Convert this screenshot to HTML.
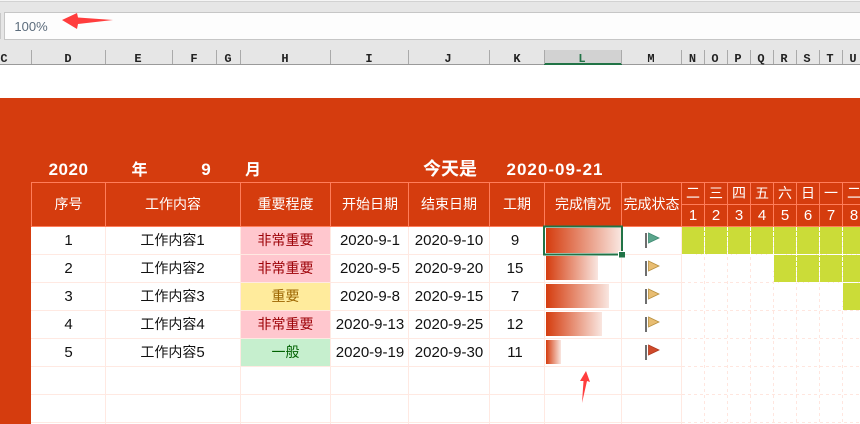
<!DOCTYPE html>
<html><head><meta charset="utf-8">
<style>
html,body{margin:0;padding:0;background:#fff;width:860px;height:424px;overflow:hidden}
svg{display:block}
text{font-family:"Liberation Sans","Noto Sans CJK SC",sans-serif;font-size:14px;text-anchor:middle}
.c text{font-family:"Liberation Mono",monospace;font-size:12px;font-weight:bold;fill:#222}
.h text{fill:#fff}
.t text{fill:#fff;font-weight:bold;font-size:16px}
.b text{fill:#111}
.n{font-size:15px}
.hl line{stroke:#ff7d5a;stroke-width:1}
.bl line{stroke:#ffe9e2;stroke-width:1}
.d line{stroke:#ffe6df;stroke-width:1;stroke-dasharray:3 3}
.cs line{stroke:#aaa;stroke-width:1}
.w line{stroke:#fff;stroke-width:1;stroke-dasharray:4 1}
</style></head><body>
<svg width="860" height="424" viewBox="0 0 860 424" xmlns="http://www.w3.org/2000/svg">
<defs>
<linearGradient id="g"><stop offset="0" stop-color="#d53c0e"/><stop offset="1" stop-color="#f9e6e0"/></linearGradient>
</defs>
<!-- top chrome -->
<rect x="0" y="0" width="860" height="65" fill="#e6e6e6"/>
<rect x="0" y="0" width="860" height="1" fill="#f5f5f5"/>
<rect x="0" y="1" width="860" height="1" fill="#d2d2d2"/>
<rect x="4.5" y="12.5" width="860" height="27" fill="#fdfdfd" stroke="#c6c6c6"/>
<rect x="0" y="13" width="1" height="26" fill="#c8c8c8"/>
<text x="31" y="31" style="font-size:13px;fill:#5c6c7c">100%</text>
<polygon points="62,20 77,13 78,17.5 113,20 78,24 77,29" fill="#ff3d3d"/>
<!-- column header -->
<rect x="544" y="50" width="77" height="14" fill="#d2d2d2"/>
<rect x="0" y="64" width="860" height="1" fill="#9a9a9a"/>
<rect x="544" y="63" width="78" height="2" fill="#217346"/>
<g class="cs">
<line x1="31.5" y1="50" x2="31.5" y2="64"/><line x1="105.5" y1="50" x2="105.5" y2="64"/><line x1="172.5" y1="50" x2="172.5" y2="64"/><line x1="216.5" y1="50" x2="216.5" y2="64"/><line x1="240.5" y1="50" x2="240.5" y2="64"/><line x1="330.5" y1="50" x2="330.5" y2="64"/><line x1="408.5" y1="50" x2="408.5" y2="64"/><line x1="489.5" y1="50" x2="489.5" y2="64"/><line x1="544.5" y1="50" x2="544.5" y2="64"/><line x1="621.5" y1="50" x2="621.5" y2="64"/><line x1="681.5" y1="50" x2="681.5" y2="64"/><line x1="704.5" y1="50" x2="704.5" y2="64"/><line x1="727.5" y1="50" x2="727.5" y2="64"/><line x1="750.5" y1="50" x2="750.5" y2="64"/><line x1="773.5" y1="50" x2="773.5" y2="64"/><line x1="796.5" y1="50" x2="796.5" y2="64"/><line x1="819.5" y1="50" x2="819.5" y2="64"/><line x1="842.5" y1="50" x2="842.5" y2="64"/>
</g>
<g class="c">
<text x="4" y="62">C</text><text x="68" y="62">D</text><text x="138" y="62">E</text><text x="194" y="62">F</text><text x="228" y="62">G</text><text x="285" y="62">H</text><text x="369" y="62">I</text><text x="448" y="62">J</text><text x="517" y="62">K</text><text x="582" y="62" style="fill:#217346">L</text><text x="651" y="62">M</text><text x="692.5" y="62">N</text><text x="715" y="62">O</text><text x="738" y="62">P</text><text x="761" y="62">Q</text><text x="784" y="62">R</text><text x="807" y="62">S</text><text x="830" y="62">T</text><text x="853" y="62">U</text>
</g>
<!-- orange area -->
<rect x="0" y="98" width="860" height="326" fill="#d53c0e"/>
<rect x="31" y="227" width="829" height="197" fill="#fff"/>
<g class="t">
<text x="68.5" y="175" style="font-size:17px;letter-spacing:.5px">2020</text>
<text x="139.5" y="175">年</text>
<text x="206" y="175" style="font-size:17px">9</text>
<text x="253" y="175">月</text>
<text x="450" y="175" style="font-size:18px">今天是</text>
<text x="555" y="175" style="font-size:17px;letter-spacing:1px">2020-09-21</text>
</g>
<!-- header lines -->
<g class="hl">
<line x1="31" y1="182.5" x2="860" y2="182.5"/><line x1="681" y1="204.5" x2="860" y2="204.5"/><line x1="31" y1="226.5" x2="860" y2="226.5"/>
<line x1="31.5" y1="182" x2="31.5" y2="227"/><line x1="105.5" y1="182" x2="105.5" y2="227"/><line x1="240.5" y1="182" x2="240.5" y2="227"/><line x1="330.5" y1="182" x2="330.5" y2="227"/><line x1="408.5" y1="182" x2="408.5" y2="227"/><line x1="489.5" y1="182" x2="489.5" y2="227"/><line x1="544.5" y1="182" x2="544.5" y2="227"/><line x1="621.5" y1="182" x2="621.5" y2="227"/><line x1="681.5" y1="182" x2="681.5" y2="227"/><line x1="704.5" y1="182" x2="704.5" y2="227"/><line x1="727.5" y1="182" x2="727.5" y2="227"/><line x1="750.5" y1="182" x2="750.5" y2="227"/><line x1="773.5" y1="182" x2="773.5" y2="227"/><line x1="796.5" y1="182" x2="796.5" y2="227"/><line x1="819.5" y1="182" x2="819.5" y2="227"/><line x1="842.5" y1="182" x2="842.5" y2="227"/>
</g>
<g class="h">
<text x="68.5" y="209">序号</text><text x="173" y="209">工作内容</text><text x="285.5" y="209">重要程度</text><text x="370" y="209">开始日期</text><text x="449" y="209">结束日期</text><text x="517" y="209">工期</text><text x="583" y="209">完成情况</text><text x="651.5" y="209">完成状态</text>
<text x="693" y="198">二</text><text x="716" y="198">三</text><text x="739" y="198">四</text><text x="762" y="198">五</text><text x="785" y="198">六</text><text x="808" y="198">日</text><text x="831" y="198">一</text><text x="854" y="198">二</text>
<text class="n" x="693" y="220">1</text><text class="n" x="716" y="220">2</text><text class="n" x="739" y="220">3</text><text class="n" x="762" y="220">4</text><text class="n" x="785" y="220">5</text><text class="n" x="808" y="220">6</text><text class="n" x="831" y="220">7</text><text class="n" x="854" y="220">8</text>
</g>
<!-- priority cells -->
<rect x="241" y="227" width="89" height="27" fill="#ffc7ce"/>
<rect x="241" y="255" width="89" height="27" fill="#ffc7ce"/>
<rect x="241" y="283" width="89" height="27" fill="#ffeb9c"/>
<rect x="241" y="311" width="89" height="27" fill="#ffc7ce"/>
<rect x="241" y="339" width="89" height="27" fill="#c6efce"/>
<!-- gantt fills -->
<rect x="682" y="227" width="178" height="27" fill="#cbdc38"/>
<rect x="774" y="255" width="86" height="27" fill="#cbdc38"/>
<rect x="843" y="283" width="17" height="27" fill="#cbdc38"/>
<!-- body grid -->
<g class="d">
<line x1="704.5" y1="227" x2="704.5" y2="424"/><line x1="727.5" y1="227" x2="727.5" y2="424"/><line x1="750.5" y1="227" x2="750.5" y2="424"/><line x1="773.5" y1="227" x2="773.5" y2="424"/><line x1="796.5" y1="227" x2="796.5" y2="424"/><line x1="819.5" y1="227" x2="819.5" y2="424"/><line x1="842.5" y1="227" x2="842.5" y2="424"/>
<line x1="682" y1="254.5" x2="860" y2="254.5"/><line x1="682" y1="282.5" x2="860" y2="282.5"/><line x1="682" y1="310.5" x2="860" y2="310.5"/><line x1="682" y1="338.5" x2="860" y2="338.5"/><line x1="682" y1="366.5" x2="860" y2="366.5"/><line x1="682" y1="394.5" x2="860" y2="394.5"/><line x1="682" y1="422.5" x2="860" y2="422.5"/>
</g>
<g class="w">
<line x1="704.5" y1="227" x2="704.5" y2="254"/><line x1="727.5" y1="227" x2="727.5" y2="254"/><line x1="750.5" y1="227" x2="750.5" y2="254"/><line x1="773.5" y1="227" x2="773.5" y2="282"/><line x1="796.5" y1="227" x2="796.5" y2="282"/><line x1="819.5" y1="227" x2="819.5" y2="282"/><line x1="842.5" y1="227" x2="842.5" y2="310"/>
<line x1="682" y1="254.5" x2="860" y2="254.5"/><line x1="774" y1="282.5" x2="860" y2="282.5"/>
</g>
<g class="bl">
<line x1="31" y1="254.5" x2="682" y2="254.5"/><line x1="31" y1="282.5" x2="682" y2="282.5"/><line x1="31" y1="310.5" x2="682" y2="310.5"/><line x1="31" y1="338.5" x2="682" y2="338.5"/><line x1="31" y1="366.5" x2="682" y2="366.5"/><line x1="31" y1="394.5" x2="682" y2="394.5"/><line x1="31" y1="422.5" x2="682" y2="422.5"/>
<line x1="105.5" y1="227" x2="105.5" y2="424"/><line x1="240.5" y1="227" x2="240.5" y2="424"/><line x1="330.5" y1="227" x2="330.5" y2="424"/><line x1="408.5" y1="227" x2="408.5" y2="424"/><line x1="489.5" y1="227" x2="489.5" y2="424"/><line x1="544.5" y1="227" x2="544.5" y2="424"/><line x1="621.5" y1="227" x2="621.5" y2="424"/><line x1="681.5" y1="227" x2="681.5" y2="424"/>
</g>
<!-- body text -->
<g class="b">
<text class="n" x="68.5" y="245">1</text><text x="172.5" y="245">工作内容<tspan class="n">1</tspan></text><text x="285.5" y="245" style="fill:#9c0006">非常重要</text><text class="n" x="370" y="245">2020-9-1</text><text class="n" x="449" y="245">2020-9-10</text><text class="n" x="515" y="245">9</text>
<text class="n" x="68.5" y="273">2</text><text x="172.5" y="273">工作内容<tspan class="n">2</tspan></text><text x="285.5" y="273" style="fill:#9c0006">非常重要</text><text class="n" x="370" y="273">2020-9-5</text><text class="n" x="449" y="273">2020-9-20</text><text class="n" x="515" y="273">15</text>
<text class="n" x="68.5" y="301">3</text><text x="172.5" y="301">工作内容<tspan class="n">3</tspan></text><text x="285.5" y="301" style="fill:#9c6500">重要</text><text class="n" x="370" y="301">2020-9-8</text><text class="n" x="449" y="301">2020-9-15</text><text class="n" x="515" y="301">7</text>
<text class="n" x="68.5" y="329">4</text><text x="172.5" y="329">工作内容<tspan class="n">4</tspan></text><text x="285.5" y="329" style="fill:#9c0006">非常重要</text><text class="n" x="370" y="329">2020-9-13</text><text class="n" x="449" y="329">2020-9-25</text><text class="n" x="515" y="329">12</text>
<text class="n" x="68.5" y="357">5</text><text x="172.5" y="357">工作内容<tspan class="n">5</tspan></text><text x="285.5" y="357" style="fill:#006100">一般</text><text class="n" x="370" y="357">2020-9-19</text><text class="n" x="449" y="357">2020-9-30</text><text class="n" x="515" y="357">11</text>
</g>
<!-- data bars -->
<rect x="546" y="228" width="75" height="25" fill="url(#g)"/>
<rect x="546" y="256" width="52" height="24" fill="url(#g)"/>
<rect x="546" y="284" width="63" height="24" fill="url(#g)"/>
<rect x="546" y="312" width="56" height="24" fill="url(#g)"/>
<rect x="546" y="340" width="15" height="24" fill="url(#g)"/>
<!-- selection -->
<rect x="544" y="226.5" width="78" height="28" fill="none" stroke="#217346" stroke-width="2"/>
<rect x="618" y="251" width="7" height="7" fill="#fff"/>
<rect x="619" y="252" width="6" height="5.5" fill="#217346"/>
<!-- flags -->
<g>
<rect x="645" y="233" width="2" height="15" fill="#6e6e6e"/><polygon points="648.5,233 659,238 648.5,243" fill="#5aa58c" stroke="#3f8a72" stroke-width=".8"/>
<rect x="645" y="261" width="2" height="15" fill="#6e6e6e"/><polygon points="648.5,261 659,266 648.5,271" fill="#e8bd72" stroke="#b8903f" stroke-width=".8"/>
<rect x="645" y="289" width="2" height="15" fill="#6e6e6e"/><polygon points="648.5,289 659,294 648.5,299" fill="#e8bd72" stroke="#b8903f" stroke-width=".8"/>
<rect x="645" y="317" width="2" height="15" fill="#6e6e6e"/><polygon points="648.5,317 659,322 648.5,327" fill="#e8bd72" stroke="#b8903f" stroke-width=".8"/>
<rect x="645" y="345" width="2" height="15" fill="#6e6e6e"/><polygon points="648.5,345 659,350 648.5,355" fill="#cf4a2a" stroke="#b03a20" stroke-width=".8"/>
</g>
<!-- red arrow -->
<polygon points="586,371 590,382 587,381 582,403 583.5,381 580,381" fill="#ff3d3d"/>
</svg>
</body></html>
